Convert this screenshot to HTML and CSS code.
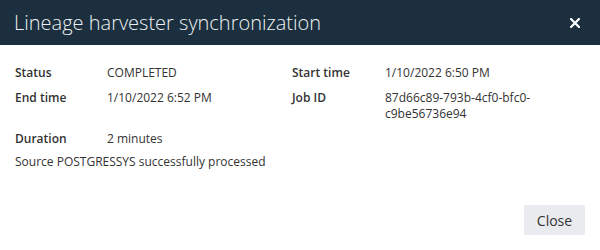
FILE: index.html
```html
<!DOCTYPE html>
<html>
<head>
<meta charset="utf-8">
<link rel="stylesheet" href="styles.css">
</head>
<body>
<div class="dialog">
  <div class="header">
    <div class="title">Lineage harvester synchronization</div>
    <div class="close-x">
      <svg width="10" height="10" viewBox="0 0 10 10"><path d="M1 1L9 9M9 1L1 9" stroke="#fff" stroke-width="2.2" stroke-linecap="square"/></svg>
    </div>
  </div>
  <div class="body">
    <div class="grid">
      <div class="label">Status</div><div class="value">COMPLETED</div>
      <div class="label">Start time</div><div class="value">1/10/2022 6:50 PM</div>
      <div class="label">End time</div><div class="value">1/10/2022 6:52 PM</div>
      <div class="label">Job ID</div><div class="value">87d66c89-793b-4cf0-bfc0-<br>c9be56736e94</div>
      <div class="label">Duration</div><div class="value">2 minutes</div>
      <div></div><div></div>
    </div>
    <div class="message">Source POSTGRESSYS successfully processed</div>
  </div>
  <div class="footer">
    <button class="btn">Close</button>
  </div>
</div>
</body>
</html>
```
FILE: styles.css
```css
html, body { margin: 0; padding: 0; background: #fff; }
body { font-family: "Open Sans", sans-serif; color: #333; width: 600px; height: 250px; overflow: hidden; }
.dialog { display: flex; flex-direction: column; height: 250px; }
.header { background: #1b2f3e; height: 45px; display: flex; align-items: center; justify-content: space-between; padding: 0 20px 0 14px; }
.title { color: #eef1f3; font-size: 20px; font-weight: 300; }
.close-x { display: flex; align-items: center; }
.body { padding: 20px 15px 0 15px; flex: 1; }
.grid { display: grid; grid-template-columns: 92px 185px 93px 1fr; row-gap: 9px; font-size: 12px; line-height: 16px; }
.label { font-weight: 600; }
.value { font-weight: 400; }
.message { font-size: 12px; line-height: 16px; margin-top: 7px; }
.footer { display: flex; justify-content: flex-end; padding: 0 15px 15px 0; }
.btn { font-family: "Open Sans", sans-serif; font-size: 14px; color: #333; background: #e9ebee; border: none; width: 61px; height: 30px; padding: 0; }
```
